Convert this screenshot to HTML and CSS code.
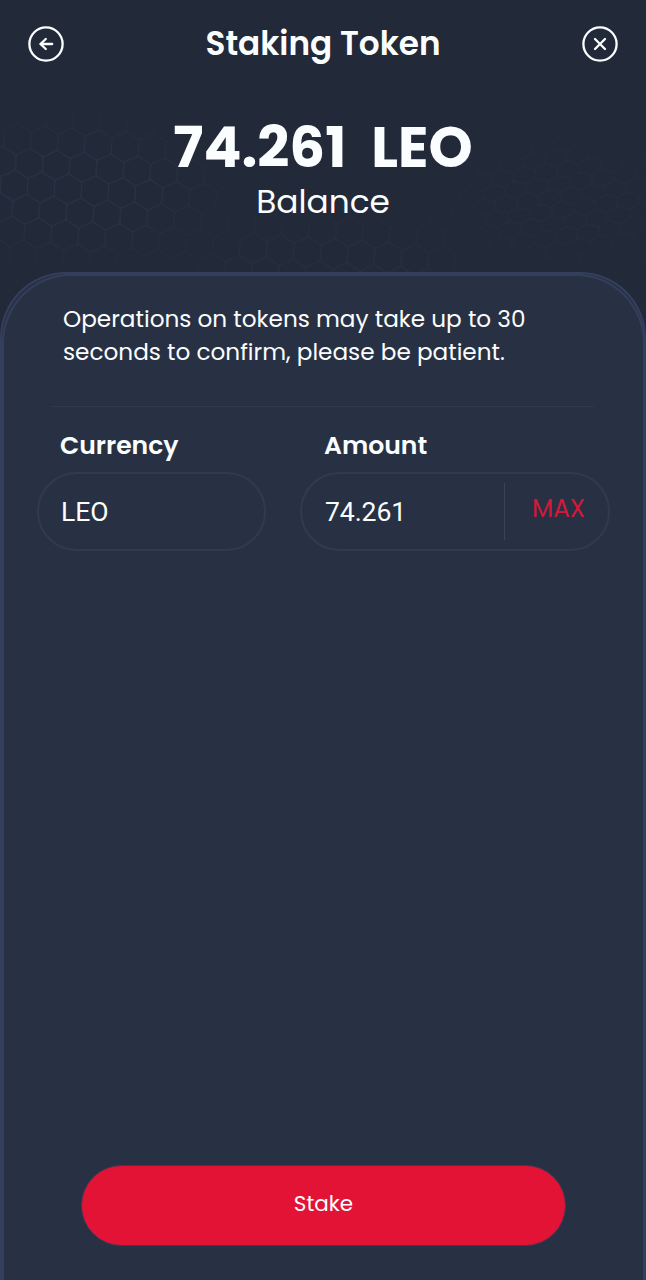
FILE: index.html
```
<!DOCTYPE html>
<html lang="en">
<head>
  <meta charset="UTF-8">
  <meta name="viewport" content="width=device-width, initial-scale=1.0">
  <title>Staking Token</title>
  <link rel="stylesheet" href="styles.css">
</head>
<body>
  <svg class="honeycomb" width="646" height="340" viewBox="0 0 646 340">
    <defs>
      <pattern id="hex" width="27" height="46" patternUnits="userSpaceOnUse" patternTransform="rotate(4)">
        <path d="M13.5 0v8L0 15.5v15L13.5 38v8M13.5 8L27 15.5v15L13.5 38"/>
      </pattern>
      <pattern id="hex-flat" width="22" height="26" patternUnits="userSpaceOnUse" patternTransform="rotate(-8)">
        <path d="M11 0v4L0 9v8l11 5v4M11 4l11 5v8l-11 5"/>
      </pattern>
      <radialGradient id="fade">
        <stop offset="0.4" stop-color="#fff"/>
        <stop offset="1" stop-color="#000"/>
      </radialGradient>
      <mask id="mask-left"><ellipse cx="75" cy="190" rx="190" ry="95" fill="url(#fade)"/></mask>
      <mask id="mask-middle"><ellipse cx="325" cy="275" rx="210" ry="85" fill="url(#fade)"/></mask>
      <mask id="mask-right"><ellipse cx="560" cy="200" rx="160" ry="95" fill="url(#fade)"/></mask>
    </defs>
    <rect width="646" height="340" fill="url(#hex)" mask="url(#mask-left)"/>
    <rect width="646" height="340" fill="url(#hex)" mask="url(#mask-middle)" opacity="0.7"/>
    <rect width="646" height="340" fill="url(#hex-flat)" mask="url(#mask-right)" opacity="0.5"/>
  </svg>

  <header class="topbar">
    <button class="icon-btn" aria-label="Back">
      <svg width="36" height="36" viewBox="0 0 36 36">
        <circle cx="18" cy="18" r="16.6"/>
        <path d="M24.2 18H12.4M17.8 13L12.4 18l5.4 5"/>
      </svg>
    </button>
    <h1>Staking Token</h1>
    <button class="icon-btn" aria-label="Close">
      <svg width="36" height="36" viewBox="0 0 36 36">
        <circle cx="18" cy="18" r="16.6"/>
        <path d="M13 13l10 10M23 13L13 23"/>
      </svg>
    </button>
  </header>

  <section class="balance">
    <div class="balance-value"><span>74.261</span><span>LEO</span></div>
    <div class="balance-label">Balance</div>
  </section>

  <main class="panel">
    <div class="panel-inner">
      <p class="notice">Operations on tokens may take up to 30<br>seconds to confirm, please be patient.</p>
      <div class="divider"></div>
      <div class="fields">
        <div class="field currency">
          <div class="label">Currency</div>
          <div class="input">LEO</div>
        </div>
        <div class="field amount">
          <div class="label">Amount</div>
          <div class="input"><span>74.261</span><span class="max">MAX</span></div>
        </div>
      </div>
      <button class="stake">Stake</button>
    </div>
  </main>
</body>
</html>
```
FILE: styles.css
```
* {
  box-sizing: border-box;
}
body {
  margin: 0;
  height: 1280px;
  overflow: hidden;
  display: flex;
  flex-direction: column;
  position: relative;
  background: #222938;
  color: #fbfeff;
  font-family: Poppins, Inter, "Liberation Sans", sans-serif;
}
button {
  font: inherit;
  color: inherit;
  border: none;
  background: none;
  padding: 0;
}
.honeycomb {
  position: absolute;
  top: 0;
  left: 0;
  z-index: -1;
}
.honeycomb path {
  fill: none;
  stroke: #2a3345;
  stroke-width: 1.2;
}

.topbar {
  height: 87px;
  padding: 0 28px;
  display: flex;
  align-items: center;
  justify-content: space-between;
}
.icon-btn, .icon-btn svg {
  display: block;
  width: 36px;
  height: 36px;
}
.icon-btn svg {
  fill: none;
  stroke: #fbfeff;
  stroke-width: 2.3;
  stroke-linecap: round;
  stroke-linejoin: round;
}
h1 {
  margin: 0;
  padding-top: 1px;
  font-size: 32.7px;
  font-weight: 600;
  line-height: 42px;
}

.balance {
  height: 185px;
  padding-top: 26px;
  text-align: center;
}
.balance-value {
  display: flex;
  justify-content: center;
  gap: 25px;
  font-size: 56.2px;
  font-weight: 700;
  line-height: 69px;
}
.balance-label {
  font-size: 32.8px;
  line-height: 40px;
}

.panel {
  flex: 1;
  display: flex;
  border: 2px solid #333f5b;
  border-bottom: none;
  border-radius: 66px 66px 0 0;
  background: #283144;
}
.panel-inner {
  flex: 1;
  display: flex;
  flex-direction: column;
  border: 2px solid #333f5b;
  border-bottom: none;
  border-radius: 69px 69px 0 0;
  padding: 27px 33px 34px;
}
.notice {
  margin: 0 0 0 26px;
  font-size: 23.17px;
  line-height: 33px;
  white-space: nowrap;
}
.divider {
  height: 1px;
  margin: 37px 16px 0 13px;
  background: #2f394d;
}
.fields {
  display: flex;
  gap: 34px;
  margin-top: 19px;
}
.currency {
  width: 229px;
}
.amount {
  width: 310px;
}
.label {
  margin: 0 0 6px 23px;
  font-size: 25.1px;
  font-weight: 600;
  line-height: 40px;
}
.amount .label {
  margin-left: 24px;
}
.input {
  height: 79px;
  display: flex;
  align-items: center;
  justify-content: space-between;
  padding-left: 23px;
  border: 2px solid #2f3b50;
  border-radius: 40px;
  font-family: Roboto, sans-serif;
  font-size: 26.6px;
  letter-spacing: -0.1px;
}
.currency .input {
  padding-left: 22px;
}
.max {
  width: 104px;
  height: 57px;
  padding-left: 27px;
  border-left: 1px solid #37445b;
  color: #d4183a;
  font-family: Poppins, Inter, sans-serif;
  font-size: 24.6px;
  letter-spacing: 0;
  line-height: 52px;
}
.stake {
  width: 485px;
  height: 81px;
  margin: auto auto 0 44px;
  border: 1px solid #513252;
  border-radius: 41px;
  background: #e31335;
  font-size: 21.5px;
  padding-bottom: 4px;
}
```
